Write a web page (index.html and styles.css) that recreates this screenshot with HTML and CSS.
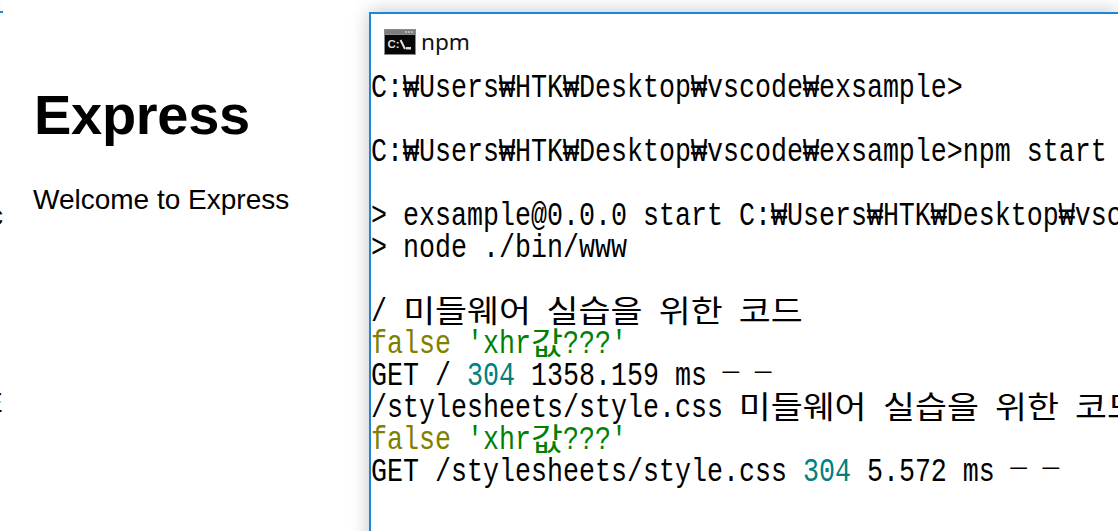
FILE: index.html
```html
<!DOCTYPE html>
<html lang="ko">
<head>
<meta charset="utf-8">
<title>npm</title>
<link rel="stylesheet" href="styles.css">
</head>
<body>
<div class="desktop">
  <main class="page">
    <div class="back-window"></div>
    <span class="edge edge-c">c</span>
    <span class="edge edge-e">E</span>
    <h1>Express</h1>
    <p>Welcome to Express</p>
  </main>
  <section class="console">
    <header class="titlebar">
      <svg class="cmd" width="32" height="26" viewBox="0 0 32 26" aria-hidden="true">
        <rect width="32" height="26" fill="#8c8c8c"/>
        <rect x="1" y="1" width="30" height="4" fill="#7d7d7d"/>
        <rect x="21" y="2" width="2" height="2" fill="#b8b8b8"/>
        <rect x="24" y="2" width="2" height="2" fill="#b8b8b8"/>
        <rect x="27" y="2" width="2" height="2" fill="#b8b8b8"/>
        <rect x="1" y="6" width="30" height="19" fill="#070707"/>
        <text x="3.5" y="18.5" class="cmd-text">C:</text>
        <path d="M16.5 11 L21 20" stroke="#e4e4e4" stroke-width="2" fill="none"/>
        <rect x="22" y="18" width="5" height="2.5" fill="#dcdcdc"/>
      </svg>
      <span class="title">npm</span>
    </header>
    <div class="screen">
      <div class="lines">
        <div class="line">C:₩Users₩HTK₩Desktop₩vscode₩exsample&gt;</div>
        <div class="line">&nbsp;</div>
        <div class="line">C:₩Users₩HTK₩Desktop₩vscode₩exsample&gt;npm start</div>
        <div class="line">&nbsp;</div>
        <div class="line">&gt; exsample@0.0.0 start C:₩Users₩HTK₩Desktop₩vscode₩exsample</div>
        <div class="line">&gt; node ./bin/www</div>
        <div class="line">&nbsp;</div>
        <div class="line">/ <span class="ko k4"><span>미들웨어</span></span> <span class="ko k3"><span>실습을</span></span> <span class="ko k2"><span>위한</span></span> <span class="ko k2"><span>코드</span></span></div>
        <div class="line"><span class="olive">false</span> <span class="green">'xhr<span class="ko k1"><span>값</span></span>???'</span></div>
        <div class="line">GET / <span class="teal">304</span> 1358.159 ms <span class="dash">-</span> <span class="dash">-</span></div>
        <div class="line">/stylesheets/style.css <span class="ko k4"><span>미들웨어</span></span> <span class="ko k3"><span>실습을</span></span> <span class="ko k2"><span>위한</span></span> <span class="ko k2"><span>코드</span></span></div>
        <div class="line"><span class="olive">false</span> <span class="green">'xhr<span class="ko k1"><span>값</span></span>???'</span></div>
        <div class="line">GET /stylesheets/style.css <span class="teal">304</span> 5.572 ms <span class="dash">-</span> <span class="dash">-</span></div>
      </div>
    </div>
  </section>
</div>
</body>
</html>
```
FILE: styles.css
```css
* { box-sizing: border-box; }
html, body { margin: 0; height: 100%; overflow: hidden; background: #fff; }
.desktop { display: flex; height: 531px; width: 1118px; overflow: hidden; padding-top: 12px; }
.page {
  position: relative;
  width: 369px;
  flex: none;
  margin-top: -12px;
  padding: 83px 0 0 34px;
  font-family: "Liberation Sans", Arial, sans-serif;
  color: #000;
  overflow: hidden;
}
.page h1 { margin: 0; font-size: 56px; line-height: 64px; font-weight: 700; letter-spacing: -0.3px; }
.page p { margin: 35px 0 0 -1px; font-size: 28px; line-height: 36px; }
.back-window {
  position: absolute;
  left: -40px;
  top: 11px;
  width: 43px;
  height: 2px;
  background: #1a86dc;
  box-shadow: 0 -2px 14px rgba(0, 0, 0, 0.22);
  clip-path: inset(-20px 0 0 0);
}
.edge { position: absolute; font-size: 28px; line-height: 32px; }
.edge-c { left: -11px; top: 200px; }
.edge-e { left: -16px; top: 387px; }
.console {
  flex: 1;
  min-width: 0;
  height: 540px;
  border: 2px solid #1a86dc;
  border-right: 0;
  border-bottom: 0;
  background: #fff;
  box-shadow: 0 0 18px rgba(0, 0, 0, 0.24);
  position: relative;
  overflow: hidden;
}
.titlebar { display: flex; align-items: center; height: 58px; padding: 0 0 3px 13px; gap: 5px; }
.cmd { flex: none; }
.cmd-text { font-family: "Liberation Sans", sans-serif; font-size: 11.5px; font-weight: 700; fill: #dedede; }
.title { font-family: "Noto Sans", sans-serif; font-size: 22.6px; line-height: 30px; color: #111; }
.screen { overflow: hidden; width: 760px; }
.lines {
  width: 1000px;
  font-family: "Liberation Mono", monospace;
  font-size: 34px;
  line-height: 32px;
  color: #000;
  transform: scaleX(0.784);
  transform-origin: left top;
}
.line { height: 32px; white-space: pre; }
.ko {
  display: inline-block;
  height: 32px;
  vertical-align: top;
  font-family: "Noto Sans CJK KR", sans-serif;
  font-size: 31px;
  line-height: 26px;
}
.ko > span { display: inline-block; transform: scaleX(1.43); transform-origin: left center; }
.k1 { width: 40.8px; }
.k2 { width: 81.6px; }
.k3 { width: 122.4px; }
.k4 { width: 163.2px; }
.dash { display: inline-block; transform: translateY(-3px) scale(2.3, 0.6); }
.olive { color: #808000; }
.green { color: #008000; }
.teal { color: #008080; }
```
